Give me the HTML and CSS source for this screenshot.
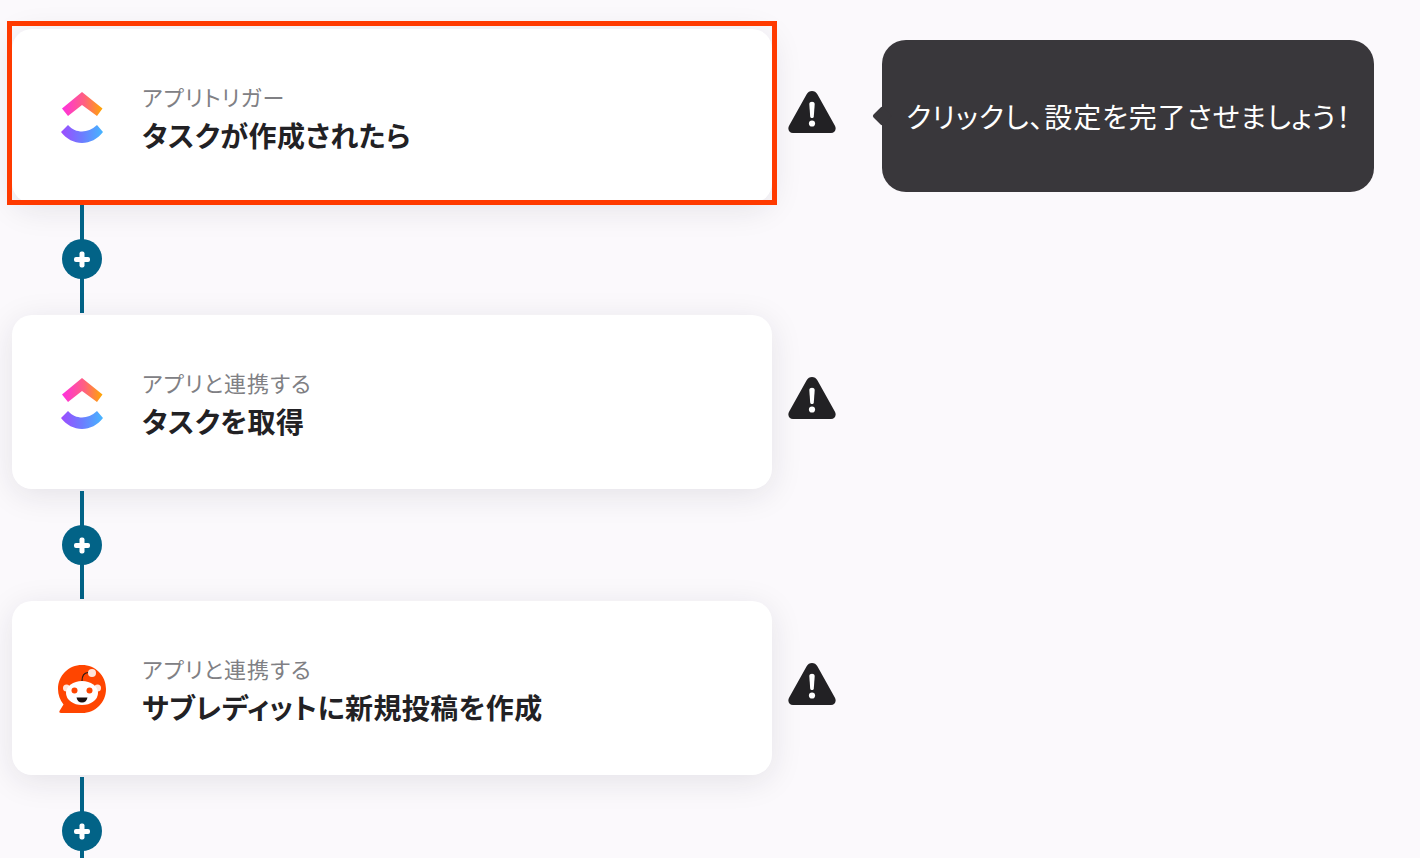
FILE: index.html
```html
<!DOCTYPE html>
<html lang="ja">
<head>
<meta charset="utf-8">
<title>フロー</title>
<link rel="stylesheet" href="styles.css">
</head>
<body>
<svg class="defs" width="0" height="0" aria-hidden="true">
  <defs>
    <linearGradient id="cu-top" x1="0" y1="0" x2="1" y2="0"><stop offset="0" stop-color="#ff2fe0"/><stop offset=".55" stop-color="#ff6080"/><stop offset="1" stop-color="#ffa800"/></linearGradient>
    <linearGradient id="cu-bottom" x1="0" y1="0" x2="1" y2="0"><stop offset="0" stop-color="#9d4cff"/><stop offset=".5" stop-color="#6d7cff"/><stop offset="1" stop-color="#45b6ff"/></linearGradient>
    <symbol id="clickup" viewBox="0 0 44 54">
      <path fill="url(#cu-top)" d="M22 2 42.500 18.500 37 26 22 15 8 26 2 18.500Z"/>
      <path fill="url(#cu-bottom)" d="M1 42 8 35C12 39.500 17 41.500 22 41.500S32 39.500 37 35L43 42C37.500 49 30 53 22 53S6.500 49 1 42Z"/>
    </symbol>
    <symbol id="warning" viewBox="0 0 48 42">
      <path fill="#222124" d="M18.500 3.500 1.200 34.500C-1 38.300 1.300 42 5 42H43C46.700 42 49 38.300 46.800 34.500L29.500 3.500C27-1.100 21-1.100 18.500 3.500Z"/>
      <path fill="#fff" d="M21.300 13C21.300 10 26.700 10 26.700 13L25.800 25.500C25.600 27.500 22.400 27.500 22.200 25.500Z"/>
      <circle cx="24" cy="32.500" r="3.100" fill="#fff"/>
    </symbol>
  </defs>
</svg>
<main class="flow">
  <section class="step">
    <div class="card card-active">
      <svg class="app-icon clickup"><use href="#clickup"/></svg>
      <div class="card-text">
        <p class="card-label">アプリトリガー</p>
        <p class="card-title">タスクが作成されたら</p>
      </div>
    </div>
    <svg class="warning"><use href="#warning"/></svg>
    <div class="tooltip">クリックし、設定を完了させましょう！</div>
  </section>
  <div class="connector"><span class="add-button"></span></div>
  <section class="step">
    <div class="card">
      <svg class="app-icon clickup"><use href="#clickup"/></svg>
      <div class="card-text">
        <p class="card-label">アプリと連携する</p>
        <p class="card-title">タスクを取得</p>
      </div>
    </div>
    <svg class="warning"><use href="#warning"/></svg>
  </section>
  <div class="connector"><span class="add-button"></span></div>
  <section class="step">
    <div class="card">
      <svg class="app-icon reddit" viewBox="0 0 50 56">
        <path fill="#ff4500" d="M25 1C11.500 1 1 11.500 1 25C1 31 3 36 6.500 40.500L2.500 47C2 48 2.500 49 4 49H25C38.500 49 49 38.500 49 25S38.500 1 25 1Z"/>
        <path fill="none" stroke="#2a1a14" stroke-width="1.200" d="M25 17C25 13 26 9 31 8.500"/>
        <circle cx="35" cy="9" r="4" fill="#ffe4da"/>
        <circle cx="9.500" cy="24" r="3.500" fill="#ffe6dc"/>
        <circle cx="40.500" cy="24" r="3.500" fill="#ffe6dc"/>
        <ellipse cx="25" cy="29" rx="16" ry="12" fill="#fff"/>
        <circle cx="17.500" cy="26.500" r="3" fill="#ff4500"/>
        <circle cx="32.500" cy="26.500" r="3" fill="#ff4500"/>
        <path fill="#1a1010" d="M19.500 33.500H30.500C30 36.500 28 38.500 25 38.500S20 36.500 19.500 33.500Z"/>
      </svg>
      <div class="card-text">
        <p class="card-label">アプリと連携する</p>
        <p class="card-title">サブレディットに新規投稿を作成</p>
      </div>
    </div>
    <svg class="warning"><use href="#warning"/></svg>
  </section>
  <div class="connector"><span class="add-button"></span></div>
</main>
</body>
</html>
```

FILE: styles.css
```css
*, *::before, *::after { box-sizing: border-box; }
html, body { margin: 0; height: 858px; overflow: hidden; }
body {
  background: #fbf9fc;
  font-family: "Noto Sans CJK JP", "Noto Sans", sans-serif;
  font-feature-settings: "palt";
  color: #222124;
}
.defs { position: absolute; }
.flow { padding: 29px 0 0 12px; }
.step { position: relative; display: flex; align-items: center; gap: 16px; }
.card {
  position: relative;
  width: 760px;
  height: 174px;
  display: flex;
  align-items: center;
  gap: 38px;
  padding-left: 48px;
  background: #fff;
  border-radius: 20px;
  box-shadow: 0 6px 32px rgba(30, 30, 50, .1);
}
.card-active::after {
  content: "";
  position: absolute;
  left: -5px;
  top: -8px;
  width: 770px;
  height: 184px;
  border: 5px solid #ff3a00;
}
.app-icon { flex: none; display: block; }
.clickup { width: 44px; height: 54px; margin-top: 2px; }
.reddit { width: 50px; height: 56px; margin: 8px -3px 0; }
.card-text { display: flex; flex-direction: column; gap: 5px; margin-top: 3px; }
.card-label { margin: 0; font-size: 22px; line-height: 30px; letter-spacing: 1px; color: #808084; }
.card-title { margin: 0; font-size: 28px; line-height: 38px; font-weight: 700; letter-spacing: .4px; color: #222124; }
.warning { flex: none; width: 48px; height: 42px; margin-top: -8px; }
.tooltip {
  position: absolute;
  left: 870px;
  top: 11px;
  width: 492px;
  height: 152px;
  display: flex;
  align-items: center;
  padding-left: 24px;
  background: #39373b;
  border-radius: 24px;
  color: #fff;
  font-size: 28px;
  letter-spacing: .9px;
  white-space: nowrap;
}
.tooltip::before {
  content: "";
  position: absolute;
  left: -7px;
  top: 69px;
  width: 14px;
  height: 14px;
  background: #39373b;
  border-radius: 2px;
  transform: rotate(45deg);
}
.connector {
  position: relative;
  width: 140px;
  height: 108px;
  margin: 2px 0;
  display: flex;
  align-items: center;
  justify-content: center;
}
.connector::before {
  content: "";
  position: absolute;
  left: 68px;
  top: 0;
  bottom: 0;
  width: 4px;
  background: #026387;
}
.add-button {
  position: relative;
  width: 40px;
  height: 40px;
  border-radius: 50%;
  background: #026387;
}
.add-button::before, .add-button::after {
  content: "";
  position: absolute;
  left: 12px;
  top: 17.500px;
  width: 16px;
  height: 5px;
  border-radius: 2px;
  background: #fff;
}
.add-button::after { transform: rotate(90deg); }
```
